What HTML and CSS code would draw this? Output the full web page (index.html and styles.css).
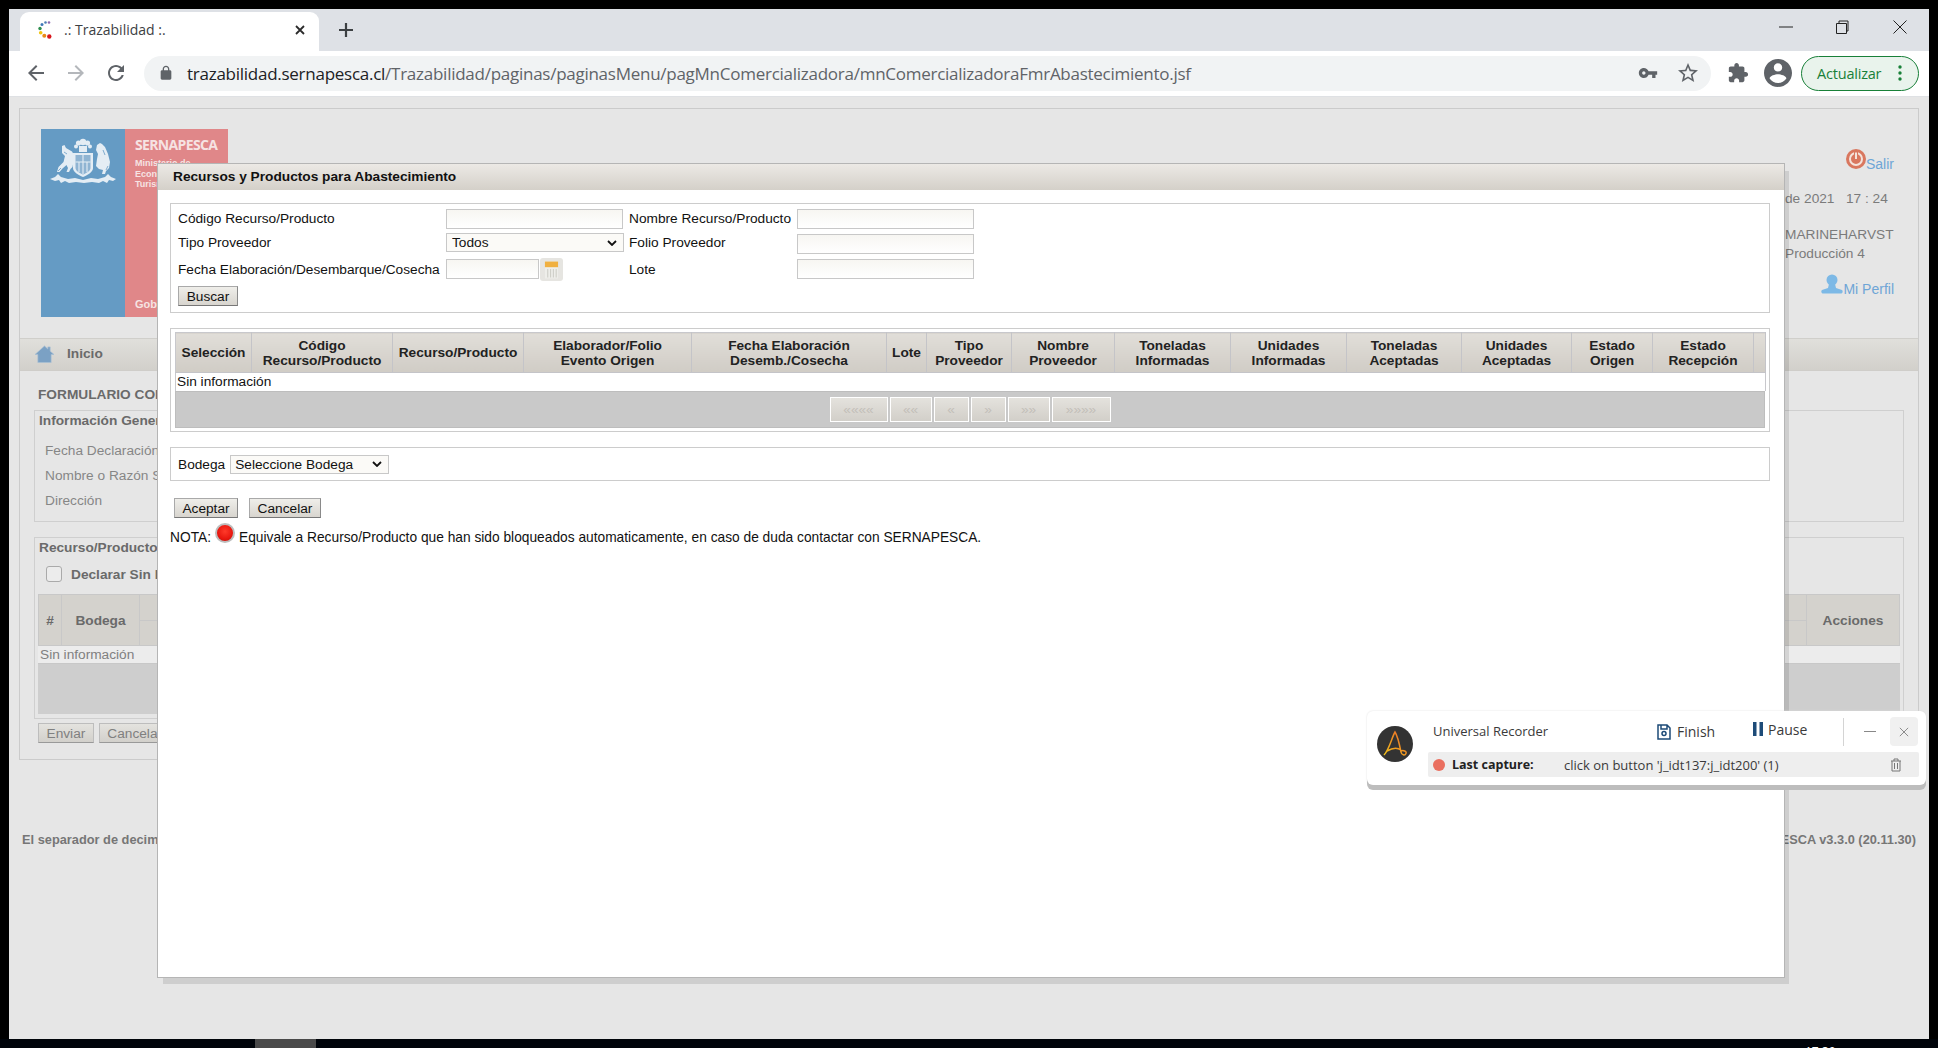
FILE: index.html
```html
<!DOCTYPE html>
<html lang="es">
<head>
<meta charset="utf-8">
<title>.: Trazabilidad :.</title>
<link rel="stylesheet" href="styles.css">
</head>
<body>
<div class="screen">
  <div class="window">
    <div class="tabstrip">
      <div class="tab">
        <svg class="favicon" viewBox="0 0 20 20"><circle cx="14" cy="2.5" r="1.3" fill="#8e6bb0"/><circle cx="10.5" cy="2.5" r="1.3" fill="#4f7fb5"/><circle cx="7" cy="4.5" r="1.5" fill="#3f78b8"/><circle cx="5" cy="8.5" r="1.7" fill="#2f8f4e"/><circle cx="5.7" cy="12.8" r="1.8" fill="#f1c40f"/><circle cx="9.3" cy="15.8" r="2" fill="#e88a1a"/><circle cx="14.3" cy="16.5" r="2.2" fill="#d9161c"/></svg>
        <span class="tab-title">.: Trazabilidad :.</span>
        <svg class="tab-close" viewBox="0 0 12 12"><path d="M2 2l8 8M10 2l-8 8"/></svg>
      </div>
      <svg class="newtab" viewBox="0 0 16 16"><path d="M8 1v14M1 8h14"/></svg>
      <div class="winctrls">
        <svg class="winbtn is-min" viewBox="0 0 16 16"><path d="M1 8h14"/></svg>
        <svg class="winbtn" viewBox="0 0 16 16"><path d="M2.5 4.500h10v10h-10zM5 4.500V2h9v10h-1.500"/></svg>
        <svg class="winbtn" viewBox="0 0 16 16"><path d="M1.500 1.500l13 13M14.500 1.500l-13 13"/></svg>
      </div>
    </div>
    <div class="toolbar">
      <svg class="tb-icon" viewBox="0 0 24 24"><path d="M20 11H7.830l5.590-5.590L12 4l-8 8 8 8 1.410-1.410L7.830 13H20v-2z"/></svg>
      <svg class="tb-icon is-dim" viewBox="0 0 24 24"><path d="M12 4l-1.410 1.410L16.170 11H4v2h12.170l-5.580 5.590L12 20l8-8z"/></svg>
      <svg class="tb-icon" viewBox="0 0 24 24"><path d="M17.650 6.350C16.200 4.900 14.210 4 12 4c-4.420 0-7.990 3.580-7.990 8s3.570 8 7.990 8c3.730 0 6.840-2.550 7.730-6h-2.080c-.82 2.330-3.040 4-5.650 4-3.310 0-6-2.690-6-6s2.690-6 6-6c1.660 0 3.140.69 4.220 1.780L13 11h7V4l-2.350 2.350z"/></svg>
      <div class="omnibox">
        <svg class="lock" viewBox="0 0 24 24"><path d="M18 8h-1V6c0-2.760-2.240-5-5-5S7 3.240 7 6v2H6c-1.100 0-2 .9-2 2v10c0 1.100.9 2 2 2h12c1.100 0 2-.9 2-2V10c0-1.100-.9-2-2-2zM9 6c0-1.660 1.340-3 3-3s3 1.340 3 3v2H9V6z"/></svg>
        <span class="url"><span class="url-host">trazabilidad.sernapesca.cl</span>/Trazabilidad/paginas/paginasMenu/pagMnComercializadora/mnComercializadoraFmrAbastecimiento.jsf</span>
        <svg class="key" viewBox="0 0 24 24"><path d="M12.650 10C11.830 7.670 9.610 6 7 6c-3.310 0-6 2.690-6 6s2.690 6 6 6c2.610 0 4.830-1.670 5.650-4H17v4h4v-4h2v-4H12.650zM7 14c-1.100 0-2-.9-2-2s.9-2 2-2 2 .9 2 2-.9 2-2 2z"/></svg>
        <svg class="star" viewBox="0 0 24 24"><path d="M22 9.240l-7.190-.62L12 2 9.190 8.630 2 9.240l5.460 4.730L5.820 21 12 17.270 18.180 21l-1.630-7.030L22 9.240zM12 15.400l-3.760 2.270 1-4.280-3.320-2.880 4.380-.38L12 6.100l1.710 4.040 4.380.38-3.320 2.880 1 4.280L12 15.400z"/></svg>
      </div>
      <svg class="puzzle" viewBox="0 0 24 24"><path d="M20.500 11H19V7c0-1.100-.9-2-2-2h-4V3.500C13 2.120 11.880 1 10.500 1S8 2.120 8 3.500V5H4c-1.100 0-1.990.9-1.990 2v3.800H3.500c1.490 0 2.700 1.210 2.700 2.700s-1.210 2.700-2.700 2.700H2V20c0 1.100.9 2 2 2h3.800v-1.500c0-1.490 1.210-2.700 2.700-2.700 1.490 0 2.700 1.210 2.700 2.700V22H17c1.100 0 2-.9 2-2v-4h1.500c1.380 0 2.500-1.120 2.500-2.500S21.880 11 20.500 11z"/></svg>
      <svg class="avatar" viewBox="2 2 20 20"><path d="M12 2C6.480 2 2 6.480 2 12s4.480 10 10 10 10-4.480 10-10S17.520 2 12 2zm0 3c1.660 0 3 1.340 3 3s-1.340 3-3 3-3-1.340-3-3 1.340-3 3-3zm0 14.200c-2.500 0-4.710-1.280-6-3.220.03-1.990 4-3.080 6-3.080 1.990 0 5.970 1.090 6 3.080-1.290 1.940-3.500 3.220-6 3.220z"/></svg>
      <div class="update-pill">
        <span>Actualizar</span>
        <svg class="kebab" viewBox="0 0 4 16"><circle cx="2" cy="2" r="1.700"/><circle cx="2" cy="8" r="1.700"/><circle cx="2" cy="14" r="1.700"/></svg>
      </div>
    </div>

    <div class="page">
      <div class="panel">
        <div class="masthead">
          <div class="logo">
            <div class="logo-blue">
              <svg class="coat" viewBox="0 0 66 48">
                <g fill="#e4edf4">
                  <circle cx="33" cy="4" r="3.200"/><circle cx="28.500" cy="5" r="2.600"/><circle cx="37.500" cy="5" r="2.600"/><circle cx="26" cy="8.500" r="2"/><circle cx="40" cy="8.500" r="2"/><rect x="29" y="8" width="8" height="6"/>
                  <path d="M12 8l2.500-1 1.500 3 6 3.500 2 3.500-.5 7-1 5-2 2-1.500 3h-2.500l1.500-4-1.500-3-4 3.500-3 3.500H7l1.500-5 5-5 1.500-6-3-3z"/>
                  <path d="M47 7l3-2 2 1 3 3 3 7 2 8-1 6-3 3-1 3h-3l1-4-4-1-3-3 1-7 1-5-2-4z"/>
                  <path d="M0 41l5-2 3-3 3 3 7 2 7-1 8 2 8-2 7 1 7-2 3-3 3 3 5 2-3 2-4-1-2 3-4-2-4 2-7-1-8 1-8-1-7 1-4-2-4 2-2-3-4 1z"/>
                  <path d="M23 15h20v15c0 4-5 7-10 9-5-2-10-5-10-9z"/>
                </g>
                <path d="M25.500 17h15v13c0 3-4 5-7.500 6.500-3.500-1.500-7.500-3.500-7.500-6.500z" fill="#8fb4d2"/>
                <path d="M33 17v19M25.500 24h15M29 24v10M37 24v10" stroke="#e4edf4" stroke-width="1.100" fill="none"/>
                <path d="M14 14l3 2M53 12l2 5M8 33l3-3M56 32l2-4" stroke="#659bc4" stroke-width=".8"/>
              </svg>
            </div>
            <div class="logo-pink">
              <div>
                <div class="logo-name">SERNAPESCA</div>
                <div class="logo-min">Ministerio de<br>Economía, Fomento y<br>Turismo</div>
              </div>
              <div class="logo-gob">Gobierno de Chile</div>
            </div>
          </div>
          <div class="usercol">
            <div class="link-row is-salir">
              <svg class="power" viewBox="0 0 20 20"><circle cx="10" cy="10" r="10" fill="#d9775f"/><circle cx="10" cy="10" r="6" fill="none" stroke="#f4e3dc" stroke-width="2"/><path d="M10 3v7" stroke="#d9775f" stroke-width="4"/><path d="M10 3.500v6.500" stroke="#f4e3dc" stroke-width="2"/></svg>
              <span>Salir</span>
            </div>
            <div class="date">de 2021 &nbsp; 17 : 24</div>
            <div class="who">MARINEHARVST</div>
            <div class="who">Producción 4</div>
            <div class="link-row is-perfil">
              <svg class="person" viewBox="0 0 22 20"><circle cx="11" cy="6" r="5.500" fill="#7db9e6"/><path d="M8 10h6l1 4 6 2c1 .6 1 3-.5 3.500h-19C0 19 0 16.600 1 16l6-2z" fill="#7db9e6"/></svg>
              <span>Mi Perfil</span>
            </div>
          </div>
        </div>
        <div class="navbar">
          <svg class="home" viewBox="0 0 20 19"><path d="M10 1L0 10h3v8.500h14V10h3l-4-3.500V2h-2.500v2.300z" fill="#7ba1c4" stroke="#a9c0d5" stroke-width=".7"/></svg>
          <span>Inicio</span>
        </div>
        <div class="content">
          <div class="form-title">FORMULARIO COMERCIALIZADORA</div>
          <div class="field is-general">
            <div class="field-head">Información General</div>
            <div class="gen-row">Fecha Declaración</div>
            <div class="gen-row">Nombre o Razón Social</div>
            <div class="gen-row">Dirección</div>
          </div>
          <div class="field is-products">
            <div class="field-head">Recurso/Producto</div>
            <div class="declare"><span class="fake-check"></span><b>Declarar Sin Movimiento</b></div>
            <div class="bg-table">
              <div class="bg-head">
                <div class="bg-hash">#</div>
                <div class="bg-bodega">Bodega</div>
                <div class="bg-spacer"><div></div><div></div></div>
                <div class="bg-acc">Acciones</div>
              </div>
              <div class="bg-row">Sin información</div>
              <div class="bg-foot"></div>
            </div>
          </div>
          <div class="bg-actions">
            <span class="bg-btn">Enviar</span>
            <span class="bg-btn">Cancelar</span>
          </div>
        </div>
      </div>
      <div class="footer">
        <span>El separador de decimales es la coma</span>
        <span>SERNAPESCA v3.3.0 (20.11.30)</span>
      </div>

      <div class="modal">
        <div class="modal-title">Recursos y Productos para Abastecimiento</div>
        <div class="modal-body">
          <div class="box search">
            <label class="lbl">Código Recurso/Producto</label>
            <input class="inp is-wide" type="text">
            <label class="lbl">Nombre Recurso/Producto</label>
            <input class="inp is-right" type="text">
            <label class="lbl">Tipo Proveedor</label>
            <select class="sel is-wide"><option>Todos</option></select>
            <label class="lbl">Folio Proveedor</label>
            <input class="inp is-right is-r2" type="text">
            <label class="lbl is-r3">Fecha Elaboración/Desembarque/Cosecha</label>
            <div class="date-cell">
              <input class="inp is-date" type="text">
              <span class="cal">
                <svg viewBox="0 0 16 20" class="cal-svg"><rect x="1" y="1" width="14" height="18" fill="#eeeeea"/><rect x="1" y="1" width="14" height="6" fill="#f0b040"/><path d="M4 9v9M7 9v9M10 9v9M13 9v9" stroke="#cfcfc8" stroke-width="1.200"/></svg>
              </span>
            </div>
            <label class="lbl is-r3">Lote</label>
            <input class="inp is-right is-r2" type="text">
            <button class="btn is-buscar" type="button">Buscar</button>
          </div>

          <div class="box results">
            <table class="grid">
              <colgroup>
                <col class="c1"><col class="c2"><col class="c3"><col class="c4"><col class="c5"><col class="c6"><col class="c7"><col class="c8"><col class="c9"><col class="c10"><col class="c11"><col class="c12"><col class="c13"><col class="c14"><col class="c15">
              </colgroup>
              <thead>
                <tr>
                  <th>Selección</th><th>Código<br>Recurso/Producto</th><th>Recurso/Producto</th><th>Elaborador/Folio<br>Evento Origen</th><th>Fecha Elaboración<br>Desemb./Cosecha</th><th>Lote</th><th>Tipo<br>Proveedor</th><th>Nombre<br>Proveedor</th><th>Toneladas<br>Informadas</th><th>Unidades<br>Informadas</th><th>Toneladas<br>Aceptadas</th><th>Unidades<br>Aceptadas</th><th>Estado<br>Origen</th><th>Estado<br>Recepción</th><th></th>
                </tr>
              </thead>
              <tbody>
                <tr><td colspan="15">Sin información</td></tr>
              </tbody>
            </table>
            <div class="pager">
              <span class="pg is-w58">««««</span><span class="pg is-w42">««</span><span class="pg is-w35">«</span><span class="pg is-w35">»</span><span class="pg is-w42">»»</span><span class="pg is-w59">»»»»</span>
            </div>
          </div>

          <div class="box bodega">
            <label class="lbl">Bodega</label>
            <select class="sel is-bodega"><option>Seleccione Bodega</option></select>
          </div>

          <div class="actions">
            <button class="btn is-aceptar" type="button">Aceptar</button>
            <button class="btn is-cancelar" type="button">Cancelar</button>
          </div>
          <div class="note">
            <span>NOTA:</span><span class="reddot"></span><span>Equivale a Recurso/Producto que han sido bloqueados automaticamente, en caso de duda contactar con SERNAPESCA.</span>
          </div>
        </div>
      </div>

      <div class="recorder">
        <svg class="rec-logo" viewBox="0 0 36 36"><defs><linearGradient id="recg" x1="0" y1="1" x2="1" y2="0"><stop offset="0" stop-color="#f2c21b"/><stop offset="1" stop-color="#e8662a"/></linearGradient></defs><circle cx="18" cy="18" r="18" fill="#333"/><path d="M7 29C12 24 15 11 18 6c2 3 5 15 6 20 .5 3 4 4 5 1.500s-3-3.500-5-2.500M10 25c5-3 10-4 14-1" fill="none" stroke="url(#recg)" stroke-width="1.500"/></svg>
        <div class="rec-main">
          <div class="rec-top">
            <span class="rec-name">Universal Recorder</span>
            <span class="rec-act is-finish">
              <svg class="rec-ico" viewBox="0 0 14 16"><path d="M1 1h9l3 3v11H1zM4 1v4h6V1M5 9.500a2 2 0 1 0 4 0a2 2 0 1 0-4 0" fill="none" stroke="#1d4b78" stroke-width="1.500"/></svg>Finish
            </span>
            <span class="rec-act is-pause">
              <svg class="rec-ico" viewBox="0 0 12 16"><path d="M1 1h3.500v14H1zM7.500 1H11v14H7.500z" fill="#1d4b78"/></svg>Pause
            </span>
            <span class="rec-div"></span>
            <span class="rec-min"></span>
            <span class="rec-close"><svg viewBox="0 0 12 12"><path d="M1 1l10 10M11 1L1 11"/></svg></span>
          </div>
          <div class="rec-bar">
            <span class="rec-dot"></span>
            <b class="rec-last">Last capture:</b>
            <span class="rec-text">click on button 'j_idt137:j_idt200' (1)</span>
            <svg class="rec-trash" viewBox="0 0 12 14"><path d="M1 3h10M4 3V1h4v2M2 3v10h8V3M4.500 5v6M7.500 5v6" fill="none" stroke="#777" stroke-width="1"/></svg>
          </div>
        </div>
      </div>
    </div>
  </div>
  <div class="taskbar"><span class="task-tile"></span><span class="clock">17:30</span></div>
</div>
</body>
</html>
```

FILE: styles.css
```css
* { box-sizing: border-box; }
html, body { margin: 0; padding: 0; background: #000; }
body { font-family: "Liberation Sans", Arial, sans-serif; font-size: 13.700px; color: #111; overflow: hidden; }

.screen { width: 1938px; height: 1048px; padding: 9px 9px 0; display: flex; flex-direction: column; overflow: hidden; }
.window { width: 1920px; height: 1030px; flex: none; display: flex; flex-direction: column; background: #e6e6e6; }

/* browser chrome */
.tabstrip { height: 42px; flex: none; background: #dee1e6; display: flex; align-items: flex-start; padding: 3px 0 0 11px; }
.tab { width: 299px; height: 39px; background: #fff; border-radius: 9px 9px 0 0; display: flex; align-items: center; padding: 0 13px 4px 15px; }
.favicon { width: 20px; height: 20px; flex: none; }
.tab-title { font-family: "Open Sans", sans-serif; font-size: 14px; color: #3c4043; margin-left: 9px; flex: 1; }
.tab-close { width: 12px; height: 12px; fill: none; stroke: #2b2b2b; stroke-width: 1.8; }
.newtab { width: 16px; height: 16px; margin: 10px 0 0 19px; fill: none; stroke: #3c4043; stroke-width: 2.200; flex: none; }
.winctrls { margin-left: auto; display: flex; gap: 42px; padding: 7px 21px 0 0; }
.winbtn { width: 16px; height: 16px; fill: none; stroke: #222; stroke-width: 1; }
.winbtn.is-min { margin-right: -2px; }

.toolbar { height: 46px; flex: none; background: #fff; border-bottom: 1px solid #dfe1e4; display: flex; align-items: center; padding: 0 10px 1px 15px; }
.tb-icon { width: 24px; height: 24px; fill: #5f6368; margin-right: 16px; flex: none; }
.tb-icon.is-dim { fill: #b4b7bb; }
.omnibox { width: 1567px; height: 35px; background: #f1f3f4; border-radius: 18px; display: flex; align-items: center; padding: 0 11px 0 14px; flex: none; }
.lock { width: 16px; height: 16px; fill: #5f6368; flex: none; }
.url { font-family: "Open Sans", sans-serif; font-size: 17px; color: #5f6368; margin-left: 13px; white-space: nowrap; letter-spacing: -.26px; flex: 1; }
.url-host { color: #202124; }
.key { width: 20px; height: 20px; fill: #5f6368; flex: none; }
.star { width: 24px; height: 24px; fill: #5f6368; flex: none; margin-left: 18px; }
.puzzle { width: 22px; height: 22px; fill: #5f6368; margin-left: 16px; flex: none; }
.avatar { width: 28px; height: 28px; fill: #5f6368; margin-left: 15px; flex: none; }
.update-pill { width: 118px; height: 35px; margin-left: 9px; flex: none; border: 1px solid #188038; border-radius: 18px; background: #e9f3ec; display: flex; align-items: center; padding: 0 14px 0 15px; justify-content: space-between; font-family: "Open Sans", sans-serif; font-size: 14.500px; color: #188038; letter-spacing: -.2px; }
.kebab { width: 4px; height: 16px; fill: #188038; margin-right: 2px; }

/* background page */
.page { position: relative; flex: 1; padding: 11px 10px 0; background: #e6e6e6; }
.panel { height: 652px; border: 1px solid #cbcbcb; display: flex; flex-direction: column; }
.masthead { height: 229px; flex: none; display: flex; justify-content: space-between; padding: 20px 24px 0 21px; }
.logo { width: 187px; height: 188px; display: flex; }
.logo-blue { width: 84px; background: #659bc4; display: flex; justify-content: center; padding-top: 9px; }
.coat { width: 66px; height: 48px; }
.logo-pink { width: 103px; background: #e08789; color: #f6e3e3; padding: 6px 0 7px 10px; display: flex; flex-direction: column; justify-content: space-between; white-space: nowrap; overflow: hidden; }
.logo-name { font-family: "Open Sans", sans-serif; font-size: 14px; font-weight: 700; letter-spacing: -.65px; line-height: 19px; }
.logo-min { font-size: 9px; font-weight: 700; line-height: 10.500px; margin-top: 4px; }
.logo-gob { font-size: 11px; font-weight: 700; }

.usercol { width: 109px; color: #7b7b7b; white-space: nowrap; padding-top: 20px; }
.link-row { display: flex; justify-content: flex-end; align-items: flex-end; color: #6ea5d6; font-size: 14px; }
.power { width: 20px; height: 20px; margin-bottom: 3px; }
.person { width: 22px; height: 20px; margin-bottom: 3px; }
.date { margin-top: 19px; line-height: 16px; }
.who { line-height: 19px; }
.date + .who { margin-top: 18px; }
.is-perfil { margin-top: 11px; }

.navbar { height: 33px; flex: none; background: linear-gradient(#e0dfdb, #d2d0cb); border-top: 1px solid #d0cfcb; border-bottom: 1px solid #cfcdc9; display: flex; align-items: center; padding: 0 0 2px 15px; font-weight: 700; color: #6a6a6a; }
.home { width: 19px; height: 18px; margin-right: 13px; }
.content { flex: 1; padding: 16px 14px 0 14px; white-space: nowrap; color: #808080; }
.form-title { font-weight: 700; color: #6a6a6a; padding-left: 4px; line-height: 16px; }
.field { border: 1px solid #cfcfcf; padding: 0 3px; }
.field-head { font-weight: 700; color: #6a6a6a; line-height: 16px; padding: 2px 1px 0; }
.is-general { height: 112px; margin-top: 7px; }
.gen-row { padding-left: 7px; color: #868686; line-height: 16px; margin-bottom: 9px; }
.field-head + .gen-row { margin-top: 14px; }
.is-products { height: 182px; margin-top: 15px; }
.declare { display: flex; align-items: center; gap: 9px; padding-left: 8px; margin-top: 10px; height: 16px; color: #6a6a6a; }
.fake-check { width: 16px; height: 16px; border: 1px solid #aaa; border-radius: 3px; background: #ececec; }
.bg-table { margin-top: 12px; }
.bg-head { height: 52px; display: flex; background: #d4d2cd; border: 1px solid #c8c8c8; font-weight: 700; color: #6a6a6a; text-align: center; align-items: stretch; }
.bg-hash { width: 23px; border-right: 1px solid #c8c8c8; display: flex; align-items: center; justify-content: center; }
.bg-bodega { width: 78px; border-right: 1px solid #c8c8c8; display: flex; align-items: center; justify-content: center; }
.bg-spacer { flex: 1; display: flex; flex-direction: column; border-right: 1px solid #c8c8c8; }
.bg-spacer div { flex: 1; }
.bg-spacer div:first-child { border-bottom: 1px solid #c8c8c8; }
.bg-acc { width: 92px; display: flex; align-items: center; justify-content: center; }
.bg-row { height: 18px; background: #ececec; border-bottom: 1px solid #c8c8c8; line-height: 17px; padding-left: 2px; color: #808080; }
.bg-foot { height: 50px; background: #cecece; }
.bg-actions { display: flex; gap: 5px; margin-top: 4px; padding-left: 4px; }
.bg-btn { height: 20px; line-height: 19px; padding: 0 7.500px; border: 1px solid #bdbdbd; border-bottom-color: #999; background: linear-gradient(#e4e3df, #d2d0cb); color: #808080; }
.footer { display: flex; justify-content: space-between; margin-top: 72px; padding: 0 3px; font-weight: 700; color: #767676; font-size: 12.800px; line-height: 16px; white-space: nowrap; }

/* modal */
.modal { position: absolute; left: 148px; top: 66px; width: 1628px; height: 815px; background: #fff; border: 1px solid #b5b5b5; box-shadow: 5px 7px 0 -1px rgba(0, 0, 0, .1); display: flex; flex-direction: column; }
.modal-title { height: 26px; flex: none; background: linear-gradient(#ece9e5, #d4d0c9); padding-left: 15px; font-weight: 700; line-height: 25px; color: #111; }
.modal-body { flex: 1; padding: 13px 14px 0 12px; }
.box { border: 1px solid #cccccc; background: #fff; }
.search { height: 110px; padding: 5px 0 0 7px; display: grid; grid-template-columns: 268px 183px 168px 178px; grid-template-rows: 24px 25px 28px 20px; align-items: start; }
.lbl { height: 19px; line-height: 19px; color: #111; white-space: nowrap; }
.lbl.is-r3 { margin-top: 2px; }
.inp { height: 20px; border: 1px solid #c8c8c8; background: linear-gradient(#f7f6f2, #fff); padding: 0 4px; margin: 0; display: block; font: 13.700px "Liberation Sans", Arial, sans-serif; }
.inp.is-wide { width: 177px; }
.inp.is-right { width: 177px; }
.inp.is-r2 { margin-top: 1px; }
.inp.is-date { width: 93px; margin-top: 1px; }
.sel { height: 19px; border: 1px solid #c8c8c8; margin: 0; padding: 0 5px; font: 13.700px "Liberation Sans", Arial, sans-serif; color: #111; border-radius: 0; appearance: none; -webkit-appearance: none; background: #fbfaf7 url("data:image/svg+xml,%3Csvg xmlns='http://www.w3.org/2000/svg' viewBox='0 0 10 6'%3E%3Cpath d='M1 1l4 4 4-4' fill='none' stroke='%23111' stroke-width='1.800'/%3E%3C/svg%3E") no-repeat right 6px center / 10px 6px; }
.sel.is-wide { width: 178px; }
.date-cell { display: flex; gap: 1px; }
.cal { width: 23px; height: 23px; background: #e6e5e1; border-radius: 3px; display: flex; align-items: center; justify-content: center; }
.cal-svg { width: 15px; height: 20px; }
.btn { height: 20px; margin: 0; padding: 0; font: 13.700px "Liberation Sans", Arial, sans-serif; color: #111; border: 1px solid #a9a9a9; border-bottom-color: #777; border-right-color: #8a8a8a; background: linear-gradient(#efeeea, #d8d5cf); }
.is-buscar { width: 60px; }
.results { height: 104px; margin-top: 15px; padding: 3px 0 0 4px; }
.grid { width: 1590px; border-collapse: collapse; table-layout: fixed; border: 1px solid #c8c8cc; border-bottom: 0; }
.grid th { height: 40px; padding: 0; font-size: 13.700px; line-height: 15px; color: #222; font-weight: 700; background: linear-gradient(#e1ded9, #d0ccc5); border-right: 1px solid #c4c4c8; border-bottom: 1px solid #c4c4c8; white-space: nowrap; }
.grid td { height: 18px; padding: 0 0 0 1px; line-height: 17px; background: #fff; color: #111; }
.c1 { width: 76px; } .c2 { width: 141px; } .c3 { width: 131px; } .c4 { width: 168px; } .c5 { width: 195px; }
.c6 { width: 40px; } .c7 { width: 85px; } .c8 { width: 103px; } .c9 { width: 116px; } .c10 { width: 116px; }
.c11 { width: 115px; } .c12 { width: 110px; } .c13 { width: 81px; } .c14 { width: 101px; } .c15 { width: 12px; }
.pager { width: 1590px; height: 37px; background: #c9c9c9; border: 1px solid #bdbdbd; display: flex; justify-content: center; align-items: center; gap: 2px; }
.pg { height: 25px; border: 1px solid #fff; background: linear-gradient(#e4e2dd, #d2cfc9); color: #c3bfb9; display: flex; align-items: center; justify-content: center; font-size: 13.700px; }
.is-w58 { width: 58px; } .is-w42 { width: 42px; } .is-w35 { width: 35px; } .is-w59 { width: 59px; }
.bodega { height: 34px; margin-top: 15px; display: flex; align-items: center; gap: 5px; padding-left: 7px; }
.sel.is-bodega { width: 159px; height: 19px; padding-left: 4px; }
.actions { display: flex; gap: 11px; margin-top: 17px; padding-left: 4px; }
.is-aceptar { width: 64px; }
.is-cancelar { width: 72px; }
.note { display: flex; align-items: flex-end; height: 22px; margin-top: 5px; color: #111; font-size: 13.750px; line-height: 15px; white-space: nowrap; }
.reddot { width: 20px; height: 20px; margin: 0 4px 2px 4px; border-radius: 50%; border: 2px solid #bdbdbd; background: radial-gradient(circle at 50% 40%, #ff3a2a 0, #e8170f 60%, #b40e08 100%); flex: none; }

/* recorder */
.recorder { position: absolute; left: 1358px; top: 614px; width: 559px; height: 74px; background: #fff; border-radius: 6px; box-shadow: 0 5px 0 #bdbdbd, 0 0 2px #ddd; display: flex; padding: 6px 7px 7px 10px; font-family: "Open Sans", sans-serif; font-size: 13px; color: #3a3a3a; }
.rec-logo { width: 36px; height: 36px; margin: 9px 15px 0 0; flex: none; }
.rec-main { flex: 1; display: flex; flex-direction: column; }
.rec-top { height: 29px; display: flex; align-items: center; white-space: nowrap; }
.rec-name { width: 229px; padding-left: 5px; font-size: 13px; margin-top: -2px; }
.rec-act { display: flex; align-items: center; gap: 6px; font-size: 14px; }
.rec-ico { width: 14px; height: 16px; flex: none; }
.is-finish { width: 94px; }
.is-pause { width: 92px; margin-top: -5px; gap: 3px; }
.rec-div { width: 1px; height: 28px; background: #d4d4d4; }
.rec-min { width: 12px; height: 1px; background: #888; margin: 0 14px 0 20px; }
.rec-close { width: 28px; height: 29px; background: #f0f0f0; border-radius: 4px; display: flex; align-items: center; justify-content: center; }
.rec-close svg { width: 10px; height: 10px; fill: none; stroke: #777; stroke-width: 1; }
.rec-bar { height: 25px; margin-top: 6px; background: #eeeeee; border-radius: 2px; display: flex; align-items: center; padding-left: 5px; white-space: nowrap; }
.rec-dot { width: 12px; height: 12px; border-radius: 50%; background: #ea6f5f; flex: none; }
.rec-last { width: 112px; margin-left: 7px; font-size: 12.500px; color: #222; }
.rec-text { flex: 1; font-size: 13px; }
.rec-trash { width: 12px; height: 14px; margin-right: 17px; flex: none; }

.taskbar { height: 20px; margin: 0 -9px; flex: none; background: #00040a; display: flex; padding-left: 255px; overflow: hidden; }
.task-tile { width: 61px; height: 9px; background: #4a4a4a; }
.clock { margin: 6px 0 0 1489px; color: #fff; font-size: 12px; font-family: "Open Sans", sans-serif; line-height: 14px; }
```
